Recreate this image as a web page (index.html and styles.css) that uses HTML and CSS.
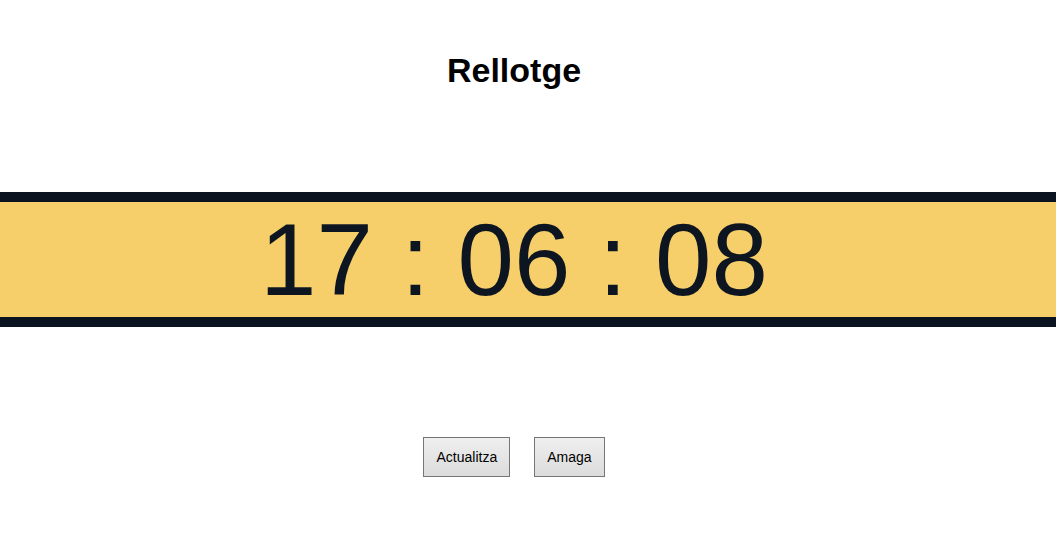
FILE: index.html
```html
<!DOCTYPE html>
<html lang="ca">
<head>
<meta charset="utf-8">
<title>Rellotge</title>
<link rel="stylesheet" href="styles.css">
</head>
<body>
<header class="head"><h1 class="title">Rellotge</h1></header>
<section class="band">
  <div class="clock">17 : 06 : 08</div>
</section>
<div class="actions">
  <button class="btn" type="button">Actualitza</button>
  <button class="btn" type="button">Amaga</button>
</div>
</body>
</html>
```
FILE: styles.css
```css
html, body { margin: 0; padding: 0; background: #fff; }
body { font-family: "Liberation Sans", Arial, sans-serif; color: #000; }
.head { padding: 50px 28px 0 0; text-align: center; }
.title { margin: 0; font-size: 34px; font-weight: bold; line-height: 40px; }
.band {
  margin-top: 102px;
  background: #f6cf6a;
  border-top: 10px solid #0b1320;
  border-bottom: 10px solid #0b1320;
  height: 115px;
  display: flex;
  align-items: center;
  justify-content: center;
  padding-right: 28px;
}
.clock { font-size: 101.5px; line-height: 1; color: #0d1520; padding-top: 2px; }
.actions {
  margin-top: 110px;
  display: flex;
  justify-content: center;
  gap: 24px;
  padding-right: 28px;
}
.btn {
  font-family: "Liberation Sans", Arial, sans-serif;
  font-size: 14px;
  color: #000;
  height: 40px;
  padding: 0 12px;
  border: 1px solid #767676;
  border-radius: 0;
  background: linear-gradient(#efefef, #dcdcdc);
}
```
